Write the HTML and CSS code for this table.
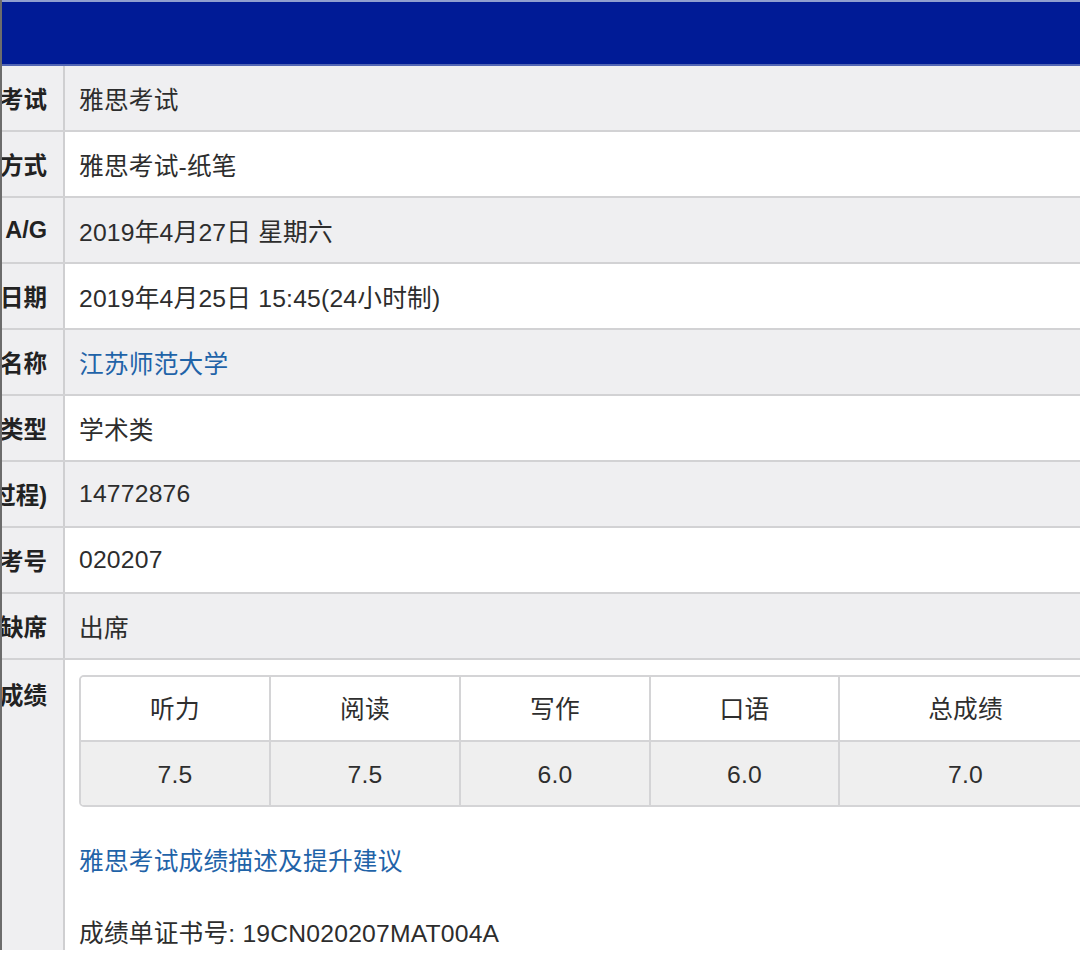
FILE: index.html
```html
<!DOCTYPE html>
<html lang="zh-CN">
<head>
<meta charset="utf-8">
<title>雅思成绩</title>
<link rel="stylesheet" href="styles.css">
</head>
<body>
<div class="page">
  <div class="topbar"></div>
  <div class="rows">
    <div class="row alt"><div class="label"><span>考试</span></div><div class="value">雅思考试</div></div>
    <div class="row"><div class="label"><span>方式</span></div><div class="value">雅思考试-纸笔</div></div>
    <div class="row alt"><div class="label"><span>A/G</span></div><div class="value">2019年4月27日 星期六</div></div>
    <div class="row"><div class="label"><span>日期</span></div><div class="value">2019年4月25日 15:45(24小时制)</div></div>
    <div class="row alt"><div class="label"><span>名称</span></div><div class="value"><a class="link" href="#">江苏师范大学</a></div></div>
    <div class="row"><div class="label"><span>类型</span></div><div class="value">学术类</div></div>
    <div class="row alt"><div class="label"><span>过程)</span></div><div class="value">14772876</div></div>
    <div class="row"><div class="label"><span>考号</span></div><div class="value">020207</div></div>
    <div class="row alt"><div class="label"><span>缺席</span></div><div class="value">出席</div></div>
    <div class="row last">
      <div class="label top"><span>成绩</span></div>
      <div class="value block">
        <div class="scores">
          <div class="srow head">
            <div class="cell c1">听力</div>
            <div class="cell c2">阅读</div>
            <div class="cell c3">写作</div>
            <div class="cell c4">口语</div>
            <div class="cell c5">总成绩</div>
          </div>
          <div class="srow data">
            <div class="cell c1">7.5</div>
            <div class="cell c2">7.5</div>
            <div class="cell c3">6.0</div>
            <div class="cell c4">6.0</div>
            <div class="cell c5">7.0</div>
          </div>
        </div>
        <a class="link advice" href="#">雅思考试成绩描述及提升建议</a>
        <div class="cert">成绩单证书号: 19CN020207MAT004A</div>
      </div>
    </div>
  </div>
</div>
</body>
</html>
```

FILE: styles.css
```css
html, body {
  margin: 0;
  padding: 0;
  background: #ffffff;
}
body {
  width: 1080px;
  height: 956px;
  overflow: hidden;
  font-family: "Liberation Sans", "Noto Sans CJK SC", sans-serif;
  font-size: 24.7px;
  color: #2d2d2d;
}
.page {
  width: 1080px;
  border-left: 2px solid #6c6c6c;
  box-sizing: border-box;
}
.topbar {
  height: 62px;
  background: #001b96;
  border-top: 2px solid #8f9fcf;
  border-bottom: 2px solid #5266b4;
}
.row {
  display: flex;
  height: 64px;
  border-bottom: 2px solid #d2d2d4;
  background: #ffffff;
}
.row.alt {
  background: #efeff1;
}
.label {
  flex: 0 0 63px;
  display: flex;
  justify-content: flex-end;
  align-items: center;
  padding-right: 16px;
  box-sizing: border-box;
  overflow: hidden;
  background: #efeff1;
  border-right: 2px solid #cfcfd1;
  font-weight: bold;
  font-size: 23.5px;
  color: #222;
  white-space: nowrap;
}
.label span {
  flex: none;
}
.label.top {
  align-items: flex-start;
  padding-top: 17px;
}
.value {
  flex: 1;
  display: flex;
  align-items: center;
  padding-left: 14px;
  white-space: nowrap;
  letter-spacing: 0.2px;
}
.link {
  color: #1f63a8;
  text-decoration: none;
}
.row.last {
  height: auto;
  border-bottom: none;
}
.value.block {
  display: block;
  padding-top: 15px;
  padding-left: 14px;
}
.scores {
  width: 1010px;
  border: 2px solid #d4d4d6;
  border-radius: 5px;
  overflow: hidden;
}
.srow {
  display: flex;
  height: 63px;
}
.srow.head {
  background: #ffffff;
  border-bottom: 2px solid #d4d4d6;
}
.srow.head .cell {
  padding-bottom: 3px;
}
.srow.data {
  background: #efefef;
}
.srow.data .cell {
  padding-top: 3px;
}
.cell {
  display: flex;
  align-items: center;
  justify-content: center;
  border-right: 2px solid #d4d4d6;
  color: #2e2e2e;
  box-sizing: border-box;
}
.c1, .c2, .c3 { flex: 0 0 190px; }
.c4 { flex: 0 0 189px; }
.c5 { flex: 1; border-right: none; }
.advice {
  display: block;
  margin-top: 39px;
  line-height: 32px;
}
.cert {
  margin-top: 40px;
  line-height: 32px;
}
```
